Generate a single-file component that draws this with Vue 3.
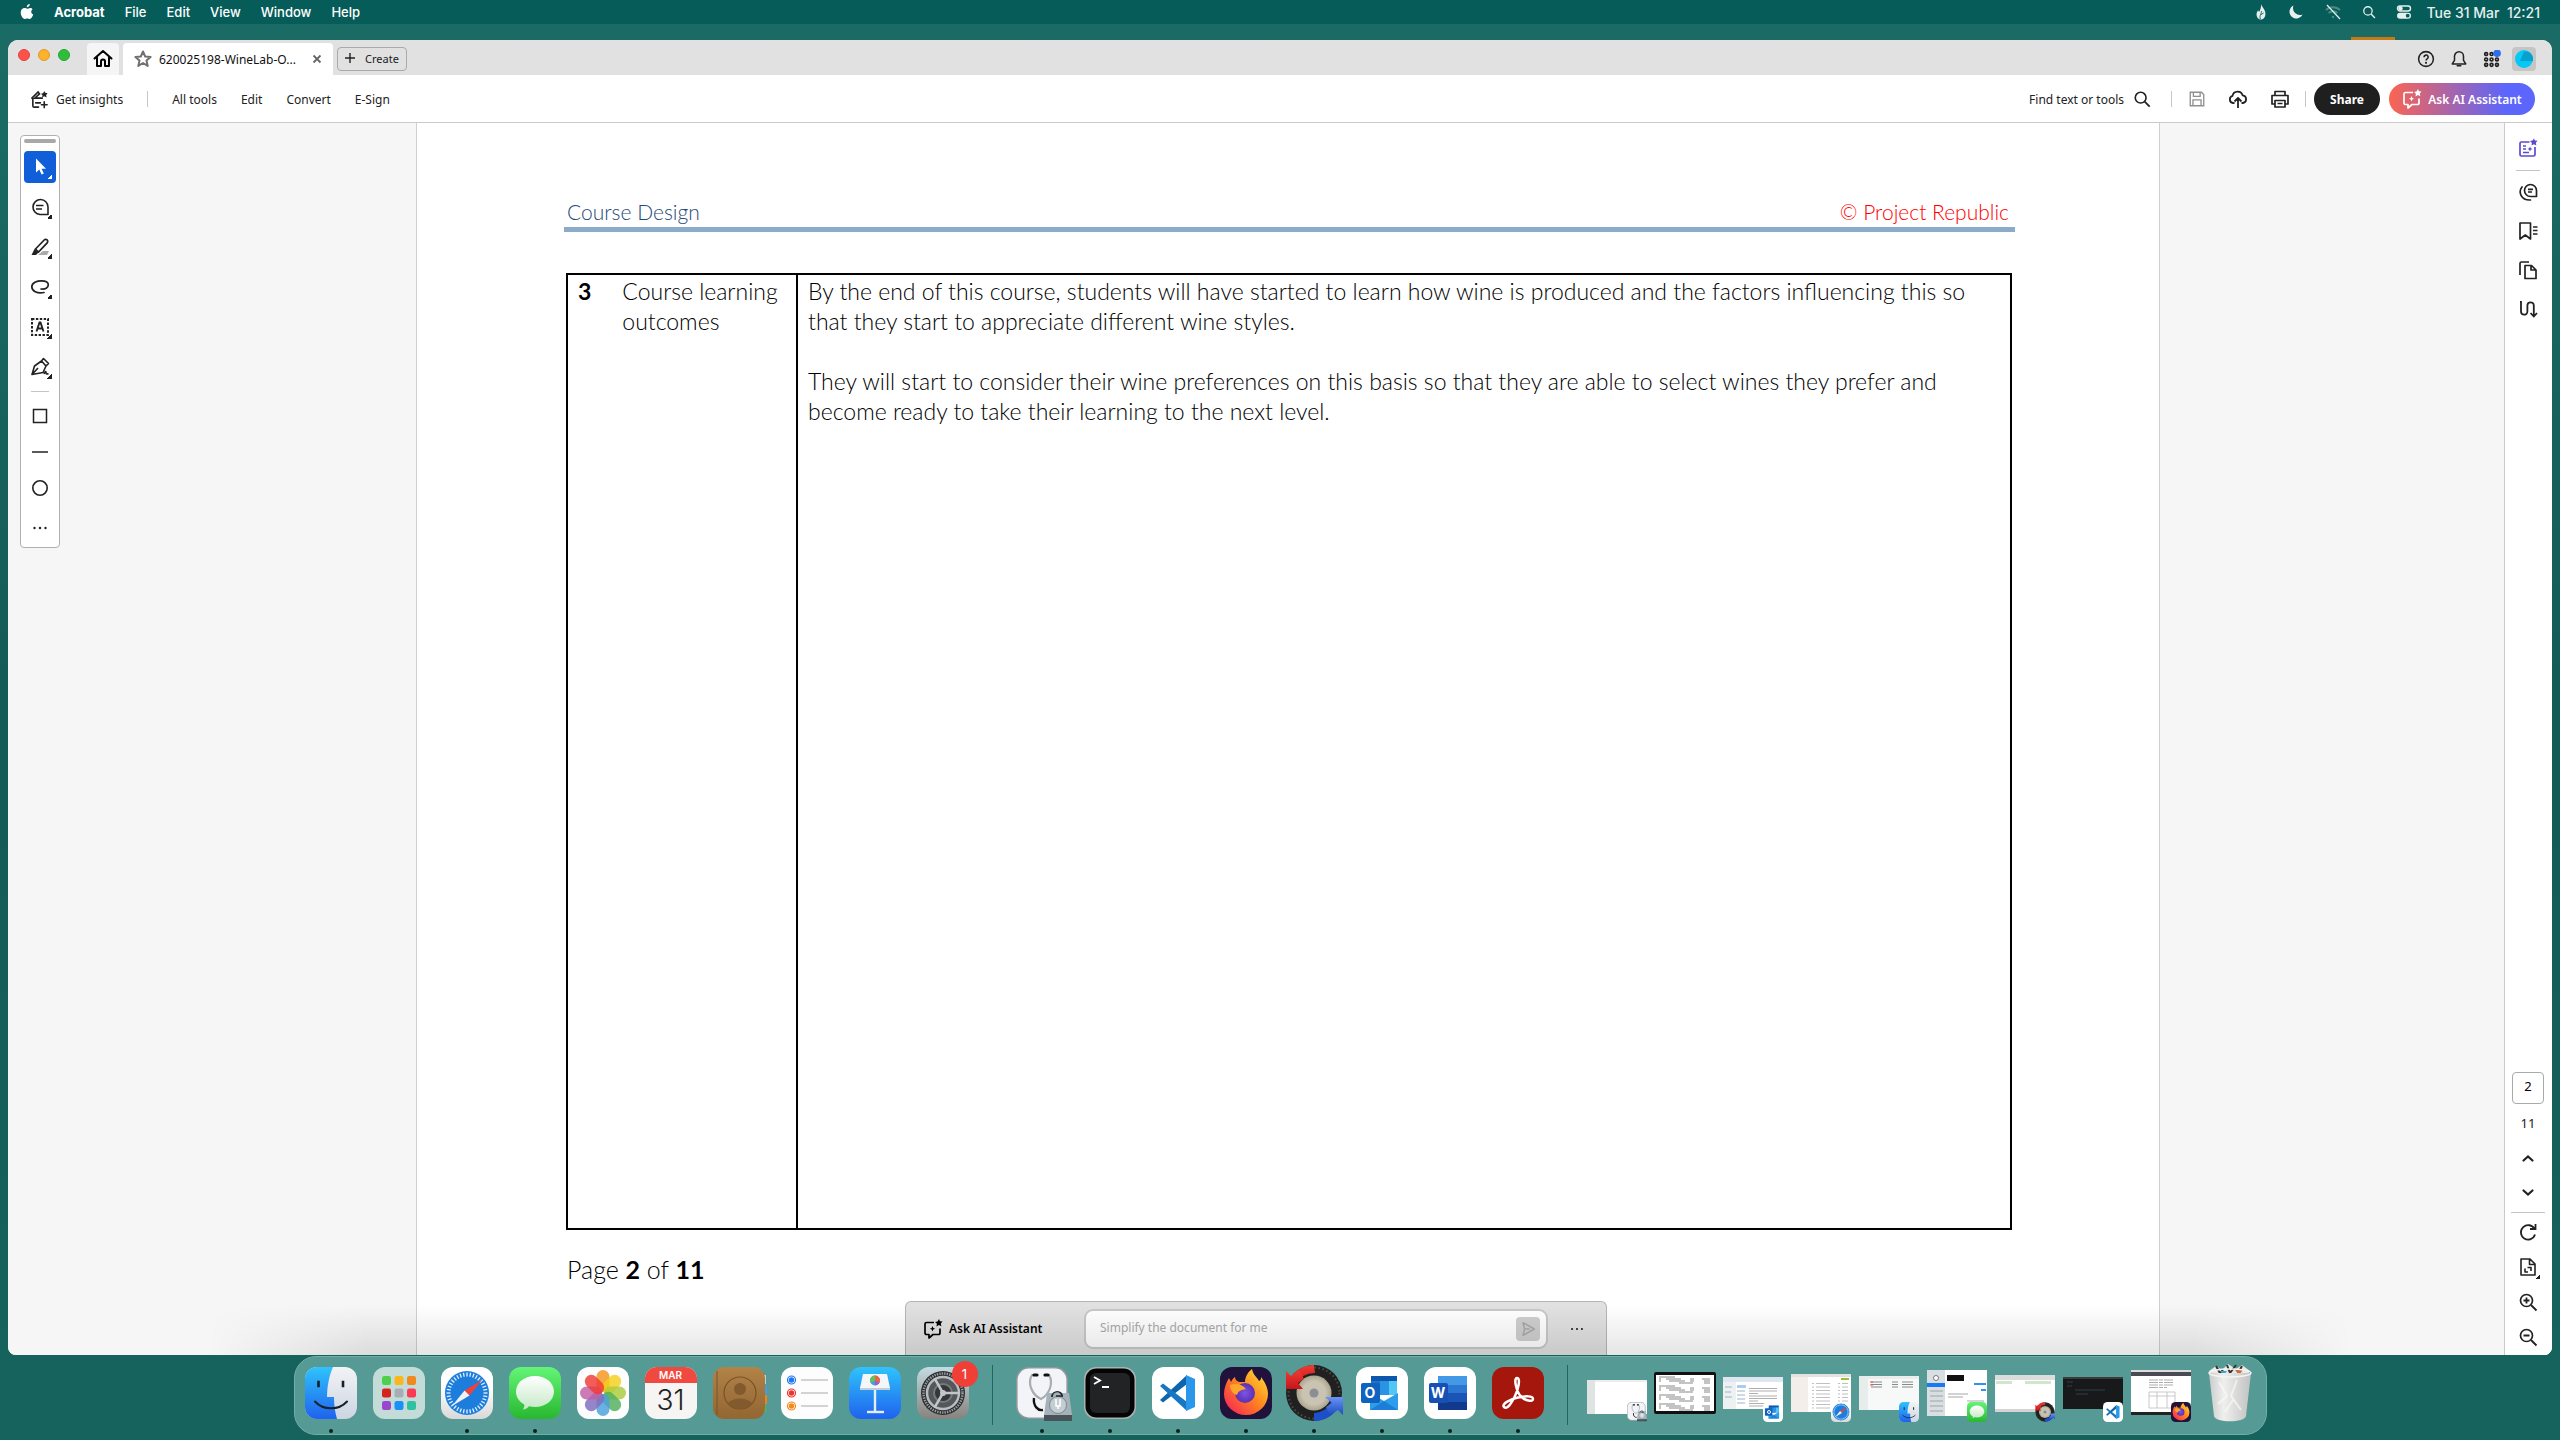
<script setup>
const menus = ['File', 'Edit', 'View', 'Window', 'Help']
const toolLinks = ['All tools', 'Edit', 'Convert', 'E-Sign']

const quickTools = [
  { id: 'cursor', label: 'Select', more: true, active: true },
  { id: 'comment', label: 'Add comment', more: true },
  { id: 'highlight', label: 'Highlight', more: true },
  { id: 'draw', label: 'Draw freehand', more: true },
  { id: 'textbox', label: 'Add text', more: true },
  { id: 'sign', label: 'Sign', more: true },
]
const shapeTools = [
  { id: 'square', label: 'Rectangle' },
  { id: 'line', label: 'Line' },
  { id: 'circle', label: 'Oval' },
  { id: 'dots', label: 'More' },
]
const panels = [
  { id: 'comments', label: 'Comments' },
  { id: 'bookmark', label: 'Bookmarks' },
  { id: 'pages', label: 'Pages' },
  { id: 'route', label: 'Reading order' },
]
const viewTools = [
  { id: 'rotate', label: 'Rotate' },
  { id: 'fit', label: 'Fit page', more: true },
  { id: 'zoomin', label: 'Zoom in' },
  { id: 'zoomout', label: 'Zoom out' },
]

const pinned = [
  { id: 'finder', label: 'Finder', open: true },
  { id: 'launchpad', label: 'Launchpad' },
  { id: 'safari', label: 'Safari', open: true },
  { id: 'messages', label: 'Messages', open: true },
  { id: 'photos', label: 'Photos' },
  { id: 'calendar', label: 'Calendar', month: 'MAR', day: '31' },
  { id: 'contacts', label: 'Contacts' },
  { id: 'reminders', label: 'Reminders' },
  { id: 'keynote', label: 'Keynote' },
  { id: 'settings', label: 'System Settings', badge: '1' },
]
const running = [
  { id: 'disk', label: 'Disk Utility' },
  { id: 'terminal', label: 'Terminal' },
  { id: 'vscode', label: 'Code' },
  { id: 'firefox', label: 'Firefox' },
  { id: 'beyond', label: 'Sync' },
  { id: 'outlook', label: 'Outlook', mark: 'O' },
  { id: 'word', label: 'Word', mark: 'W' },
  { id: 'acrobat', label: 'Acrobat' },
]
const minimized = [
  { id: 'disk', thumb: 'blank' },
  { id: '', thumb: 'term' },
  { id: 'outlook', thumb: 'mail', ring: true },
  { id: 'safari', thumb: 'web' },
  { id: 'finder', thumb: 'files' },
  { id: 'messages', thumb: 'chat' },
  { id: 'beyond', thumb: 'compare' },
  { id: 'vscode', thumb: 'code' },
  { id: 'firefox', thumb: 'page' },
]
const petals = ['#f7941d', '#f4cf1a', '#a9cc3c', '#4fae5b', '#4a9fdc', '#7f6bbd', '#c05fa6', '#ee3b35']
const ticks = Array.from({ length: 36 }, (_, i) => i * 10)
</script>

<template>
  <svg class="defs" aria-hidden="true">
    <defs>
      <linearGradient id="gBlue" x2="0" y2="1"><stop stop-color="#2fc3fb" /><stop offset="1" stop-color="#1f62ee" /></linearGradient>
      <linearGradient id="gPale" x2="0" y2="1"><stop stop-color="#f3f3f5" /><stop offset="1" stop-color="#ccd5e2" /></linearGradient>
      <linearGradient id="gWhite" x2="0" y2="1"><stop offset=".4" stop-color="#fff" /><stop offset="1" stop-color="#d8d8d8" /></linearGradient>
      <linearGradient id="gGreen" x2="0" y2="1"><stop stop-color="#64f578" /><stop offset="1" stop-color="#28b72f" /></linearGradient>
      <linearGradient id="gBubble" x2="0" y2="1"><stop stop-color="#fff" /><stop offset="1" stop-color="#c5e9c6" /></linearGradient>
      <linearGradient id="gBrown" x2="0" y2="1"><stop stop-color="#b18348" /><stop offset="1" stop-color="#936632" /></linearGradient>
      <linearGradient id="gSteel" x2="0" y2="1"><stop stop-color="#c4dbe2" /><stop offset="1" stop-color="#87827e" /></linearGradient>
      <linearGradient id="gFox" x1="1" x2="0" y2="1"><stop stop-color="#ffe83d" /><stop offset=".45" stop-color="#ff8a1e" /><stop offset="1" stop-color="#f5175d" /></linearGradient>
      <radialGradient id="gOrb"><stop stop-color="#7d54e8" /><stop offset="1" stop-color="#5b2fae" /></radialGradient>
      <radialGradient id="gHub"><stop stop-color="#fff" /><stop offset="1" stop-color="#aba38c" /></radialGradient>
      <linearGradient id="gRed" x2="0" y2="1"><stop stop-color="#ef3d35" /><stop offset="1" stop-color="#c4151a" /></linearGradient>
      <linearGradient id="gArrow" x2="0" y2="1"><stop stop-color="#6b93f4" /><stop offset="1" stop-color="#1c4cc4" /></linearGradient>
      <linearGradient id="gTrash" x2="1"><stop stop-color="#c9cccb" /><stop offset=".35" stop-color="#efefee" /><stop offset="1" stop-color="#bfc2c1" /></linearGradient>
    </defs>

    <!-- toolbar glyphs -->
    <symbol id="i-home" viewBox="0 0 20 20"><path d="M1.5 9.5 10 2l8.500 7.500M4 8v9h4v-4.500a2 2 0 0 1 4 0V17h4V8" fill="none" stroke="currentColor" stroke-width="2" stroke-linecap="round" stroke-linejoin="round" /></symbol>
    <symbol id="i-star" viewBox="0 0 20 20"><path d="m10 2.500 2.200 5 5.400.5-4.100 3.600 1.200 5.300L10 14l-4.700 2.900 1.200-5.300L2.400 8l5.400-.5z" fill="none" stroke="currentColor" stroke-width="2" stroke-linejoin="round" /></symbol>
    <symbol id="i-close" viewBox="0 0 10 10"><path d="m1.500 1.500 7 7m0-7-7 7" stroke="currentColor" stroke-width="1.800" /></symbol>
    <symbol id="i-plus" viewBox="0 0 10 10"><path d="M5 0v10M0 5h10" stroke="currentColor" stroke-width="1.400" /></symbol>
    <symbol id="i-insights" viewBox="0 0 20 20"><g fill="none" stroke="currentColor" stroke-width="1.700" stroke-linecap="round"><path d="M2 8.500 8.500 2l1.500 2-5 4.500H13M3 9v7.500a1.500 1.500 0 0 0 1.500 1.500H9M6 13.500h5M15 12.500v6M12 15.500h6" /></g><path d="m15 1 1 2 2.500.3-1.500 2 .5 2.700-2.500-1.300L12.700 8l.5-2.500L11.500 4l2.300-.6z" fill="currentColor" /></symbol>
    <symbol id="i-search" viewBox="0 0 20 20"><circle cx="8.500" cy="8.500" r="6" fill="none" stroke="currentColor" stroke-width="1.800" /><path d="m13 13 5.500 5.500" stroke="currentColor" stroke-width="2" /></symbol>
    <symbol id="i-save" viewBox="0 0 20 20"><path d="M2.500 2.500h12.500l2.500 2.500v12.500h-15zM6 2.500v4.500h7.500V2.500M5.500 17v-6h9v6" fill="none" stroke="currentColor" stroke-width="1.500" /></symbol>
    <symbol id="i-cloud" viewBox="0 0 20 20"><path d="M6.500 14H5a3.700 3.700 0 0 1-.5-7.200A5.200 5.200 0 0 1 14.600 6.300 3.900 3.900 0 0 1 15 14h-1.500M10 19V9.500M6.500 12.500 10 9l3.500 3.500" fill="none" stroke="currentColor" stroke-width="1.800" stroke-linejoin="round" /></symbol>
    <symbol id="i-print" viewBox="0 0 20 20"><path d="M5 6.500V2.500h10v4M5 15H2V6.500h16V15h-3M5 11.500h10v6.500H5zM7.500 14.500h5" fill="none" stroke="currentColor" stroke-width="1.700" stroke-linejoin="round" /></symbol>
    <symbol id="i-assist" viewBox="0 0 20 20"><path d="M11 3.500H3.500A1.500 1.500 0 0 0 2 5v9a1.500 1.500 0 0 0 1.500 1.500H6V19l4-3.500h5.500A1.500 1.500 0 0 0 17 14V9.500" fill="none" stroke="currentColor" stroke-width="1.700" stroke-linejoin="round" /><path d="m16 0 .9 2.300 2.600.2-1.700 2 .6 2.800-2.500-1.300L13.500 7.500l.4-2.700L12 3l2.500-.5zM9.500 7l.8 1.900 1.900.8-1.900.8-.8 1.900-.8-1.900-1.900-.8 1.900-.8z" fill="currentColor" /></symbol>
    <symbol id="i-help" viewBox="0 0 20 20"><circle cx="10" cy="10" r="8.200" fill="none" stroke="currentColor" stroke-width="1.700" /><path d="M7.800 8a2.300 2.300 0 1 1 3.300 2q-1 .5-1 1.700" fill="none" stroke="currentColor" stroke-width="1.800" /><circle cx="10" cy="14.300" r="1.200" fill="currentColor" /></symbol>
    <symbol id="i-bell" viewBox="0 0 20 20"><path d="M10 2a5 5 0 0 1 5 5v4.500l2.500 4h-15l2.500-4V7a5 5 0 0 1 5-5zM8 17.500h4" fill="none" stroke="currentColor" stroke-width="1.700" stroke-linejoin="round" stroke-linecap="round" /></symbol>
    <symbol id="i-grid" viewBox="0 0 20 20"><g fill="none" stroke="currentColor" stroke-width="1.900"><circle v-for="n in 9" :key="n" :cx="3.500 + ((n - 1) % 3) * 6" :cy="4.500 + Math.floor((n - 1) / 3) * 6" r="1.600" /></g><circle cx="15.700" cy="3.700" r="4.200" fill="#2c6fea" /></symbol>

    <!-- side tools -->
    <symbol id="i-cursor" viewBox="0 0 20 20"><path d="M6 1.500v14l3.300-3 2.200 5 2.300-1-2.200-4.800h4.400z" fill="currentColor" /></symbol>
    <symbol id="i-comment" viewBox="0 0 20 20"><path d="M18 17.500h-8a7.500 7.500 0 1 1 8-7.500zM6 8.500h7.500M6 12h6" fill="none" stroke="currentColor" stroke-width="1.600" stroke-linejoin="round" /></symbol>
    <symbol id="i-highlight" viewBox="0 0 20 20"><path d="M13 14h6l-2 4H8z" fill="#aaa" /><path d="m5.500 12 8.700-9a2 2 0 0 1 3 2.800L8.500 15z" fill="#fff" stroke="currentColor" stroke-width="1.700" /><path d="m4.500 12 4 3.500-2.500 2.500H1.500z" fill="currentColor" /></symbol>
    <symbol id="i-draw" viewBox="0 0 20 20"><path d="M14 15.500C7 17 1.800 14 1.800 9.800 1.800 5.500 7 3.800 11.500 3.800c4 0 6.800 1.400 6.800 3.900 0 3-3 5-7.300 4.300" fill="none" stroke="currentColor" stroke-width="1.700" stroke-linecap="round" /></symbol>
    <symbol id="i-textbox" viewBox="0 0 20 20"><rect x="2" y="2" width="16" height="16" fill="none" stroke="currentColor" stroke-width="2" stroke-dasharray="2.400 1.500" /><path d="m6.500 14.500 3-9h1l3 9M7.800 11.500h4.400" fill="none" stroke="currentColor" stroke-width="1.900" /></symbol>
    <symbol id="i-sign" viewBox="0 0 20 20"><path d="M2 17.500 4.500 9l7-5L16 9l-3 6.500zM11.500 4l2-2.500 5 5L16 9M2.500 17l5.500-6M14 17q2-4 2-1.500t2.500 1" fill="none" stroke="currentColor" stroke-width="1.600" stroke-linejoin="round" /></symbol>
    <symbol id="i-square" viewBox="0 0 20 20"><rect x="3.500" y="3.500" width="13" height="13" fill="none" stroke="currentColor" stroke-width="1.500" /></symbol>
    <symbol id="i-line" viewBox="0 0 20 20"><path d="M2 10h16" stroke="currentColor" stroke-width="1.500" /></symbol>
    <symbol id="i-circle" viewBox="0 0 20 20"><circle cx="10" cy="10" r="7.200" fill="none" stroke="currentColor" stroke-width="1.600" /></symbol>
    <symbol id="i-dots" viewBox="0 0 20 20"><g fill="currentColor"><circle cx="4.500" cy="10" r="1.200" /><circle cx="10" cy="10" r="1.200" /><circle cx="15.500" cy="10" r="1.200" /></g></symbol>
    <symbol id="i-summary" viewBox="0 0 20 20"><path d="M11.500 4H3.500A1.500 1.500 0 0 0 2 5.500v11A1.500 1.500 0 0 0 3.500 18h12a1.500 1.500 0 0 0 1.500-1.500V9M5 8h3M5 11h3M5 14.500h6" fill="none" stroke="currentColor" stroke-width="1.700" /><path d="m16 .5.900 2.100 2.600.2-1.700 2 .6 2.700-2.500-1.200L13.500 7.500l.4-2.500L12 3l2.500-.4zM12 8.500l.8 1.700 1.700.8-1.700.8-.8 1.700-.8-1.700-1.700-.8 1.700-.8z" fill="currentColor" /></symbol>
    <symbol id="i-comments" viewBox="0 0 20 20"><path d="M18.500 14.500h-6a6 6 0 1 1 6-6zM10 7.300h5M10 10h4" fill="none" stroke="currentColor" stroke-width="1.700" stroke-linejoin="round" /><path d="M4 5C0 10 3 18.500 12.500 18" fill="none" stroke="currentColor" stroke-width="1.700" stroke-linecap="round" /></symbol>
    <symbol id="i-bookmark" viewBox="0 0 20 20"><path d="M2 2h10.500v16l-5.200-4L2 18zM15 6h4.500M15 9.500h4.500M15 13h4.500" fill="none" stroke="currentColor" stroke-width="1.700" stroke-linejoin="round" /></symbol>
    <symbol id="i-pages" viewBox="0 0 20 20"><path d="M7 5.500h6.500L18 10v8.500H7zM13 5.500V10h5M2 15V3.500A1.500 1.500 0 0 1 3.500 2H11" fill="none" stroke="currentColor" stroke-width="1.700" stroke-linejoin="round" /></symbol>
    <symbol id="i-route" viewBox="0 0 20 20"><path d="M2 3h1v9.500a3.200 3.200 0 0 0 6.400 0V6.500a3.200 3.200 0 0 1 6.400 0V17M12.500 14l3.300 3.500L19 14" fill="none" stroke="currentColor" stroke-width="1.800" /></symbol>
    <symbol id="i-up" viewBox="0 0 20 20"><path d="m5.500 12.500 4.500-4 4.500 4" fill="none" stroke="currentColor" stroke-width="2.200" stroke-linecap="round" /></symbol>
    <symbol id="i-down" viewBox="0 0 20 20"><path d="m5.500 7.500 4.500 4 4.500-4" fill="none" stroke="currentColor" stroke-width="2.200" stroke-linecap="round" /></symbol>
    <symbol id="i-rotate" viewBox="0 0 20 20"><path d="M16.500 7A7.200 7.200 0 1 0 17 12.500M12 7h5.500V2" fill="none" stroke="currentColor" stroke-width="1.800" /></symbol>
    <symbol id="i-fit" viewBox="0 0 20 20"><path d="M3 2h9l5 5v11H3zM11.500 2v5.500H17M7 11.500V15h3M9.500 10.500H13V14" fill="none" stroke="currentColor" stroke-width="1.600" stroke-linejoin="round" /></symbol>
    <symbol id="i-zoomin" viewBox="0 0 20 20"><circle cx="8.500" cy="8.500" r="6" fill="none" stroke="currentColor" stroke-width="1.700" /><path d="m13 13 5.500 5.500M8.500 5.500v6M5.500 8.500h6" stroke="currentColor" stroke-width="1.800" /></symbol>
    <symbol id="i-zoomout" viewBox="0 0 20 20"><circle cx="8.500" cy="8.500" r="6" fill="none" stroke="currentColor" stroke-width="1.700" /><path d="m13 13 5.500 5.500M5.500 8.500h6" stroke="currentColor" stroke-width="1.800" /></symbol>
    <symbol id="i-send" viewBox="0 0 20 20"><path d="M4.500 3 17 10 4.500 17l1.700-7zM6 10h6" fill="none" stroke="currentColor" stroke-width="1.700" stroke-linejoin="round" /></symbol>

    <!-- menu bar -->
    <symbol id="i-apple" viewBox="0 0 14 16"><path fill="currentColor" d="M9.800 0c.1 1.600-1.300 3.200-3 3.200C6.600 1.700 8.100.2 9.800 0zM12.600 5.300c-2 1.300-1.700 4.200.6 5.200-.6 1.900-2 4.500-3.500 4.500-1 0-1.300-.6-2.500-.6s-1.600.6-2.500.6C2.700 15 .7 11.500.7 8.600c0-3 1.900-4.600 3.800-4.600 1.100 0 2 .7 2.700.7s1.700-.8 3-.8c.9 0 1.900.5 2.400 1.400z" /></symbol>
    <symbol id="i-drop" viewBox="0 0 14 18"><path d="M7.500 0c.5 4 4.500 6 4.500 11 0 4-2.500 6.500-5 6.500S2 15.500 2 11.500c0-2 1-3.500 2-4.500l.7 2C6.500 7 7 3.500 7.500 0z" fill="currentColor" /><path d="M6.500 17c-2-4 1-5 1-9M7 12l3-2" fill="none" stroke="#055c58" /></symbol>
    <symbol id="i-moon" viewBox="0 0 16 16"><path d="M5.500 1.500a6.800 6.800 0 1 0 9 9A7 7 0 0 1 5.500 1.500z" fill="currentColor" /></symbol>
    <symbol id="i-wifi" viewBox="0 0 18 16"><g fill="none" stroke="#6d9e99" stroke-width="2" opacity=".7"><path d="M2 6a10 10 0 0 1 14 0M4.700 9a6 6 0 0 1 8.600 0" /><path d="M8 13h2" /></g><path d="m3 1 13 14" stroke="currentColor" stroke-width="1.200" /></symbol>
    <symbol id="i-control" viewBox="0 0 16 16"><rect x="1.500" y="2" width="13" height="5" rx="2.500" fill="none" stroke="currentColor" stroke-width="1.400" /><circle cx="4.500" cy="4.500" r="2.200" fill="currentColor" /><rect x="1" y="8.700" width="14" height="6" rx="3" fill="currentColor" /><circle cx="11.700" cy="11.700" r="1.900" fill="#055c58" /></symbol>

    <!-- dock apps -->
    <symbol id="a-finder" viewBox="0 0 52 52"><rect width="52" height="52" rx="12" fill="url(#gPale)" /><path d="M12 0h16c-4 9-6 20-6 30h7c0 8 1 15 3 22H12A12 12 0 0 1 0 40V12A12 12 0 0 1 12 0z" fill="url(#gBlue)" /><path d="M13.500 15v4M38 15v4" stroke="#15202b" stroke-width="2.600" stroke-linecap="square" /><path d="M10 34.500c8 9 24 9 32 0" fill="none" stroke="#15202b" stroke-width="2" stroke-linecap="round" /></symbol>
    <symbol id="a-launchpad" viewBox="0 0 52 52"><rect width="52" height="52" rx="12" fill="#c3dcd8" /><rect v-for="(c, n) in ['#4fd04d', '#fbb51d', '#f08a1c', '#d8221d', '#a9adb3', '#fb3b54', '#9a47d0', '#1a91f8', '#31c1a0']" :key="c" :x="9 + (n % 3) * 12.500" :y="9 + Math.floor(n / 3) * 12.500" width="9" height="9" rx="2.200" :fill="c" /></symbol>
    <symbol id="a-safari" viewBox="0 0 52 52"><rect width="52" height="52" rx="12" fill="url(#gWhite)" /><circle cx="26" cy="26" r="22" fill="#1c7ddd" /><path v-for="t in ticks" :key="t" d="M26 5.500v4" stroke="#e8f3fd" stroke-width="1.300" :transform="`rotate(${t} 26 26)`" /><path d="M41 13 28.500 28.500l-5-5z" fill="#f1403a" /><path d="m11 39 12.500-15.500 5 5z" fill="#f1f1f1" /></symbol>
    <symbol id="a-messages" viewBox="0 0 52 52"><rect width="52" height="52" rx="12" fill="url(#gGreen)" /><path d="M26 9c11 0 19 7 19 15.500S37 40 26 40c-2 0-4-.3-6-.8-1.500 1.800-3.500 3-6 3.300 1-1.500 1.500-3 1.300-5C10 34.500 7 30 7 24.500 7 16 15 9 26 9z" fill="url(#gBubble)" /></symbol>
    <symbol id="a-photos" viewBox="0 0 52 52"><rect width="52" height="52" rx="12" fill="#fdfdfd" /><rect v-for="(c, n) in petals" :key="c" x="19.500" y="3" width="13" height="22" rx="6.500" :fill="c" opacity=".82" :transform="`rotate(${n * 45} 26 26)`" /></symbol>
    <symbol id="a-calendar" viewBox="0 0 52 52"><rect width="52" height="52" rx="12" fill="#f6f5f3" /><path d="M0 16v-4A12 12 0 0 1 12 0h28a12 12 0 0 1 12 12v4z" fill="#f0493f" /></symbol>
    <symbol id="a-contacts" viewBox="0 0 54 52"><path d="M46 8h7v9h-7z" fill="#c9ccce" /><path d="M46 18h8v9h-8z" fill="#3f9fe0" /><path d="M46 28h8v9h-8z" fill="#f1801f" /><path d="M46 38h7v7h-7z" fill="#52b84f" /><rect width="52" height="52" rx="11" fill="url(#gBrown)" /><path d="M4 4v44" stroke="#7b5328" /><circle cx="27" cy="26" r="16" fill="none" stroke="#7a5227" stroke-width="1.200" /><circle cx="27" cy="22" r="6" fill="#825a2d" /><path d="M15 36c5-6 19-6 24 0-6 8-18 8-24 0z" fill="#825a2d" /></symbol>
    <symbol id="a-reminders" viewBox="0 0 52 52"><rect width="52" height="52" rx="12" fill="#fdfdfd" /><g v-for="(c, n) in ['#1d76f2', '#ec342f', '#f28a1c']" :key="c"><circle cx="10.500" :cy="13 + n * 13" r="4" fill="none" :stroke="c" stroke-width="1.200" /><circle cx="10.500" :cy="13 + n * 13" r="2.700" :fill="c" /><path :d="`M20 ${13 + n * 13}h27`" stroke="#c9c9c9" stroke-width="1.600" /></g></symbol>
    <symbol id="a-keynote" viewBox="0 0 52 52"><rect width="52" height="52" rx="12" fill="url(#gBlue)" /><path d="M14 7h24l3 14H11z" fill="#f5f6f8" /><path d="M11 21h30v2H11z" fill="#c3cdd8" /><path d="M26 23v21" stroke="#e6edf7" stroke-width="2.400" /><path d="M18 45h17" stroke="#e6edf7" stroke-width="2.400" /><circle cx="26" cy="13.500" r="5" fill="#38a5e8" /><path d="M26 13.500v-5a5 5 0 0 1 4.300 7.500z" fill="#f1623c" /><path d="M26 13.500 21.700 16A5 5 0 0 1 26 8.500z" fill="#61c354" /><path d="m26 13.500 4.300 2.500a5 5 0 0 1-4.300 2.500z" fill="#a259c9" /></symbol>
    <symbol id="a-settings" viewBox="0 0 52 52"><rect width="52" height="52" rx="12" fill="url(#gSteel)" /><circle cx="26" cy="26" r="22" fill="#2c2e30" /><circle cx="26" cy="26" r="19.500" fill="none" stroke="#9a9ea0" stroke-width="2.500" stroke-dasharray="1.400 1.100" /><circle cx="26" cy="26" r="16" fill="#55585a" stroke="#b9bdbf" stroke-width="2.500" /><circle cx="26" cy="26" r="9" fill="#353739" stroke="#77797b" stroke-width="2" /><g stroke="#c3c6c8" stroke-width="2.500"><path d="M26 26h17M26 26 17.500 11.300M26 26l-8.500 14.700" /></g><circle cx="26" cy="26" r="3" fill="#c3c6c8" /></symbol>
    <symbol id="a-disk" viewBox="0 0 56 56"><rect x=".8" y=".8" width="50.400" height="50.400" rx="12" fill="#f2f4f7" stroke="#8e979c" stroke-width="1.600" /><path d="M20 8h-4c-5 8 0 20 9 24 8-4 13-16 8-24h-3" fill="none" stroke="#a7adb0" stroke-width="2.200" /><path d="M18 8h3M29 8h3" stroke="#111" stroke-width="3.200" stroke-linecap="round" /><path d="M18 31c-1 8 4 13 9 12" fill="none" stroke="#111" stroke-width="2.400" /><path d="M31 26h22l3 22H28z" fill="#a6b2ba" /><path d="M28 48h28v6H28z" fill="#49535a" /><circle cx="42" cy="38" r="8.500" fill="#c4cdd2" stroke="#7c878e" /><path d="M36 30c0-7 11-7 10 0M40 29h5" fill="none" stroke="#22282c" stroke-width="1.700" /><path d="M40 32v7h4v-7M42 39v3" fill="none" stroke="#fff" stroke-width="1.500" /></symbol>
    <symbol id="a-terminal" viewBox="0 0 52 52"><rect width="52" height="52" rx="12" fill="#aab3b4" /><rect x="1.500" y="1.500" width="49" height="49" rx="11" fill="#050505" /><rect x="6" y="6" width="40" height="40" rx="6" fill="#222324" /><path d="m10 10 6 3.500-6 3.500M18 20h7" fill="none" stroke="#fff" stroke-width="1.900" /></symbol>
    <symbol id="a-vscode" viewBox="0 0 52 52"><rect width="52" height="52" rx="12" fill="#fff" /><path d="m35 8-27 25 3 2.500L35 17z" fill="#0d66ad" /><path d="M35 44 8 19l3-2.500L35 35z" fill="#1877c4" /><path d="M34 8 43 12v28l-9 4z" fill="#2a98ea" /></symbol>
    <symbol id="a-firefox" viewBox="0 0 52 52"><rect width="52" height="52" rx="12" fill="#20123a" /><path d="M32 2c1 6 5 8 7 12 2-1 2-2 2-4 4 5 7 11 7 17a22 21 0 1 1-44 0c0-6 2-11 5-16l2 4c1-2 2-4 4-5 0 3 2 4 4 5h6c0-5 3-10 7-13z" fill="url(#gFox)" /><circle cx="25" cy="26" r="10" fill="url(#gOrb)" /><path d="M10 18c6-2 12-1 16 4-5 1-8 2-9 6-4-1-7-5-7-10z" fill="#ffa529" /></symbol>
    <symbol id="a-beyond" viewBox="0 0 58 58"><circle cx="29" cy="29" r="28" fill="#202020" /><circle cx="29" cy="29" r="25.500" fill="none" stroke="#4c4c4c" stroke-width="2" stroke-dasharray="1.500 2.500" /><path d="M29 1A28 28 0 0 0 4 16l7 4a20 20 0 0 1 19-11z" fill="url(#gRed)" /><path d="M29 57a28 28 0 0 0 25-15l-8-4a20 20 0 0 1-17 11z" fill="#1d4fca" /><circle cx="29" cy="29" r="17.500" fill="url(#gHub)" /><circle cx="29" cy="29" r="12" fill="#c9c3b1" /><circle cx="29" cy="29" r="4.500" fill="#8b8e92" /><path d="M40 33h18v18l-5-5-8 5-4-8 6-4z" fill="url(#gArrow)" /><path d="M1 7l5 5 8-6 5 9-6 4 5 6H1z" fill="url(#gRed)" /></symbol>
    <symbol id="a-outlook" viewBox="0 0 52 52"><rect width="52" height="52" rx="12" fill="#fff" /><path d="M15 9h26v18H15z" fill="#0f57ab" /><path d="M15 14h9v14h-9z" fill="#1a74d0" /><path d="M24 14h9v14h-9z" fill="#2a93e4" /><path d="M33 14h8v14h-8z" fill="#52c6f5" /><path d="M14 26 28 34l14-8v17H14z" fill="#2c9ceb" /><path d="m28 34 14 9H14z" fill="#1b7fd8" /><rect x="5" y="16" width="19" height="20" rx="2" fill="#1062c0" /></symbol>
    <symbol id="a-word" viewBox="0 0 52 52"><rect width="52" height="52" rx="12" fill="#fff" /><path d="M14 9h29v9H14z" fill="#4399e6" /><path d="M14 18h29v9H14z" fill="#2a76d0" /><path d="M14 26h29v9H14z" fill="#1a55b5" /><path d="M14 35h29v8H14z" fill="#123a8c" /><rect x="5" y="16" width="19" height="20" rx="2" fill="#1650b5" /></symbol>
    <symbol id="a-acrobat" viewBox="0 0 52 52"><rect width="52" height="52" rx="12" fill="#a5170c" /><path d="M25 11c4 0 1 12-2 18-4 8-8 14-11 11s7-8 14-9.500 15-2 15 1.500-8 1.500-12-2.500-8-18-4-18.500z" fill="none" stroke="#fff" stroke-width="2.500" stroke-linejoin="round" /></symbol>
    <symbol id="a-trash" viewBox="0 0 46 60"><path d="m2 9 7-5 6 4 6-6 8 5 6-4 8 6-4 6H6z" fill="#e8e8e6" /><path d="m9 4 4 7 3-3M20 3l3 8 6-8M35 4l-4 7" fill="none" stroke="#39332f" stroke-width="2" /><path d="M13 9h7l-3 4z" fill="#2fb0cf" /><path d="m28 8 4 5 4-5z" fill="#cf6b3a" /><path d="M2 11h42l-5 43c-1 7-31 7-32 0z" fill="url(#gTrash)" /><ellipse cx="23" cy="11" rx="21" ry="4" fill="none" stroke="#f4f4f3" stroke-width="1.500" /><path d="m12 20 8 14-9 8M30 18l-6 16 10 14M18 50l8-12" fill="none" stroke="#f9f9f8" stroke-width="2" opacity=".7" /></symbol>

    <!-- minimised windows -->
    <symbol id="t-blank" viewBox="0 0 60 52"><path d="M0 13h60v34H0z" fill="#fff" /><path d="M0 13h60v2H0z" fill="#ededed" /><path d="M0 13h8v34H0z" fill="#dfe4e2" /></symbol>
    <symbol id="t-term" viewBox="0 0 62 42"><rect width="62" height="42" rx="2" fill="#111" /><path d="M2 3h58v36H2z" fill="#fff" /><path v-for="n in 4" :key="n" :d="`M5 ${n * 9 - 4}h16M5 ${n * 9 - 2}h2M12 ${n * 9 - 2}h15M36 ${n * 9 - 2}h4M48 ${n * 9 - 2}h8M5 ${n * 9}h2M15 ${n * 9}h16M36 ${n * 9}h4M50 ${n * 9}h6M25 ${n * 9 + 2}h14M50 ${n * 9 + 2}h6`" stroke="#888" /></symbol>
    <symbol id="t-mail" viewBox="0 0 60 52"><path d="M0 10h60v32H0z" fill="#fff" /><path d="M0 10h60v5H0z" fill="#dfe6f0" /><path d="M0 15h13v27H0z" fill="#eef1f2" /><path d="M14 18h9v3h-9z" fill="#a9cdf0" /><g stroke="#999" stroke-width=".8"><path v-for="n in 8" :key="n" :d="`M26 ${19 + n * 2.500}h${n % 3 ? 28 : 9}`" /></g><path d="M14 24h8M14 28h8M14 32h8M14 36h8M2 20h7M2 25h6M2 30h7" stroke="#9ab4cc" /></symbol>
    <symbol id="t-web" viewBox="0 0 60 52"><path d="M0 7h60v38H0z" fill="#fff" /><path d="M0 7h60v3H0z" fill="#e2e2e0" /><path d="M0 10h17v35H0z" fill="#f4eeea" /><path d="M50 11h8v2h-8z" fill="#9bbf3b" /><g stroke="#b9b9b9" stroke-dasharray="2 2 14 8"><path v-for="n in 8" :key="n" :d="`M21 ${13 + n * 3.500}h36`" stroke-width=".9" /></g></symbol>
    <symbol id="t-files" viewBox="0 0 60 52"><path d="M0 9h60v34H0z" fill="#f7f9f9" /><path d="M0 9h9v34H0z" fill="#e6edeb" /><path d="M9 9h51v3H9z" fill="#ececec" /><g stroke="#7c7c7c" stroke-width=".9" stroke-dasharray="11 10 6 4"><path d="M12 15h45M12 17.500h45M12 20h45" /></g><path d="M11 15h3M11 18h3" stroke="#e35b4b" /></symbol>
    <symbol id="t-chat" viewBox="0 0 60 52"><path d="M0 3h60v46H0z" fill="#fff" /><path d="M0 3h18v46H0z" fill="#d9dee2" /><path d="M0 16h18v4H0z" fill="#1978f3" /><path d="M20 8h17v6H20z" fill="#111" /><path d="M47 16h12v2H47zM54 22h5v2h-5z" fill="#2e92f4" /><circle cx="9" cy="11" r="2.500" fill="#fff" stroke="#777" /><g stroke="#9c9c9c" stroke-width=".9"><path d="M3 24h13M3 29h13M3 34h13M3 39h13M3 44h13M21 27h20M21 30h15M40 34h17" /></g></symbol>
    <symbol id="t-compare" viewBox="0 0 60 52"><path d="M0 8h60v37H0z" fill="#fff" /><path d="M0 8h60v5H0z" fill="#dcdcdc" /><path d="M1 14h16v3H1zM30 14h26v3H30z" fill="#cfe8cb" /><path d="M0 42h60v3H0z" fill="#d5d5d5" /></symbol>
    <symbol id="t-code" viewBox="0 0 60 52"><path d="M0 10h60v32H0z" fill="#18191b" /><path d="M0 10h60v2H0z" fill="#3a3b3d" /><path d="M4 15h6M12 23h30M4 19h5M13 27h12" stroke="#345" stroke-width=".9" /></symbol>
    <symbol id="t-page" viewBox="0 0 60 52"><path d="M0 3h60v45H0z" fill="#fff" /><path d="M0 3h60v2H0z" fill="#ddd" /><path d="M0 5h60v4H0z" fill="#4a4a52" /><path d="M0 45h60v3H0z" fill="#222" /><g stroke="#999" stroke-width=".8" stroke-dasharray="9 1 4 1"><path d="M18 13h24M18 15.500h24M18 18h24M18 20.500h18" /></g><path d="M18 25h26v16H18zM26 25v16M36 25v16M18 29h26" fill="none" stroke="#bbb" stroke-width=".8" /></symbol>
  </svg>

  <div class="desktop">
    <header class="menubar">
      <nav class="menus">
        <button class="menu apple" aria-label="Apple"><svg width="14" height="16"><use href="#i-apple" /></svg></button>
        <button class="menu app-name">Acrobat</button>
        <button v-for="m in menus" :key="m" class="menu">{{ m }}</button>
      </nav>
      <div class="status">
        <svg width="14" height="16"><use href="#i-drop" /></svg>
        <svg width="16" height="16"><use href="#i-moon" /></svg>
        <svg width="18" height="16"><use href="#i-wifi" /></svg>
        <svg width="14" height="14"><use href="#i-search" /></svg>
        <svg width="16" height="16"><use href="#i-control" /></svg>
        <time>Tue 31 Mar&nbsp; 12:21</time>
      </div>
    </header>

    <div class="behind"><span class="peek"></span></div>

    <main class="window">
      <div class="tabbar">
        <div class="lights"><i class="red"></i><i class="amber"></i><i class="green"></i></div>
        <button class="home" aria-label="Home"><svg width="20" height="20"><use href="#i-home" /></svg></button>
        <div class="tab">
          <svg class="star" width="20" height="20"><use href="#i-star" /></svg>
          <span class="tab-title">620025198-WineLab-O...</span>
          <button class="close" aria-label="Close tab"><svg width="10" height="10"><use href="#i-close" /></svg></button>
        </div>
        <button class="create"><svg width="10" height="10"><use href="#i-plus" /></svg>Create</button>
        <div class="account">
          <button aria-label="Help"><svg width="18" height="18"><use href="#i-help" /></svg></button>
          <button aria-label="Notifications"><svg width="18" height="18"><use href="#i-bell" /></svg></button>
          <button aria-label="Apps"><svg width="18" height="18"><use href="#i-grid" /></svg></button>
          <button class="avatar" aria-label="Account"><svg width="18" height="18" viewBox="0 0 18 18"><circle cx="9" cy="9" r="9" fill="#06c8f7" /><path d="M9 1.500A8 8 0 0 1 18 11H5z" fill="#0aa0cb" /></svg></button>
        </div>
      </div>

      <div class="toolbar">
        <button class="insights"><svg width="19" height="19"><use href="#i-insights" /></svg>Get insights</button>
        <span class="rule"></span>
        <nav class="links"><a v-for="l in toolLinks" :key="l" href="#">{{ l }}</a></nav>
        <div class="actions">
          <button class="find">Find text or tools <svg width="18" height="18"><use href="#i-search" /></svg></button>
          <span class="rule"></span>
          <button class="muted" aria-label="Save"><svg width="18" height="18"><use href="#i-save" /></svg></button>
          <button aria-label="Upload"><svg width="20" height="20"><use href="#i-cloud" /></svg></button>
          <button aria-label="Print"><svg width="20" height="20"><use href="#i-print" /></svg></button>
          <span class="rule"></span>
          <button class="pill share">Share</button>
          <button class="pill ask"><svg width="20" height="20"><use href="#i-assist" /></svg>Ask AI Assistant</button>
        </div>
      </div>

      <div class="body">
        <aside class="tools">
          <div class="palette">
            <span class="grip"></span>
            <button v-for="t in quickTools" :key="t.id" class="tool" :class="{ active: t.active, more: t.more }" :aria-label="t.label"><svg width="20" height="20"><use :href="'#i-' + t.id" /></svg></button>
            <span class="bar"></span>
            <button v-for="t in shapeTools" :key="t.id" class="tool shape" :aria-label="t.label"><svg width="20" height="20"><use :href="'#i-' + t.id" /></svg></button>
          </div>
        </aside>

        <div class="canvas">
          <article class="sheet">
            <header class="running-head"><span>Course Design</span><span class="credit">© Project Republic</span></header>
            <table class="plan">
              <tbody>
                <tr>
                  <th scope="row"><div class="label"><b>3</b><span>Course learning<br>outcomes</span></div></th>
                  <td>
                    <p>By the end of this course, students will have started to learn how wine is produced and the factors influencing this so<br>that they start to appreciate different wine styles.</p>
                    <p>They will start to consider their wine preferences on this basis so that they are able to select wines they prefer and<br>become ready to take their learning to the next level.</p>
                  </td>
                </tr>
              </tbody>
            </table>
            <footer class="folio">Page <b>2</b> of <b>11</b></footer>
          </article>
        </div>

        <aside class="rail">
          <button class="violet" aria-label="Summary"><svg width="20" height="20"><use href="#i-summary" /></svg></button>
          <span class="bar"></span>
          <button v-for="p in panels" :key="p.id" class="panel" :aria-label="p.label"><svg width="20" height="20"><use :href="'#i-' + p.id" /></svg></button>
          <div class="pager">
            <input aria-label="Page number" value="2">
            <span class="total">11</span>
            <button aria-label="Previous page"><svg width="20" height="20"><use href="#i-up" /></svg></button>
            <button aria-label="Next page"><svg width="20" height="20"><use href="#i-down" /></svg></button>
            <span class="bar wide"></span>
            <button v-for="v in viewTools" :key="v.id" :class="{ more: v.more }" :aria-label="v.label"><svg width="20" height="20"><use :href="'#i-' + v.id" /></svg></button>
          </div>
        </aside>

        <form class="assistant" @submit.prevent>
          <label for="prompt"><svg width="20" height="20"><use href="#i-assist" /></svg>Ask AI Assistant</label>
          <div class="prompt">
            <input id="prompt" placeholder="Simplify the document for me">
            <button class="send" aria-label="Send"><svg width="18" height="18"><use href="#i-send" /></svg></button>
          </div>
          <button type="button" aria-label="More options"><svg width="18" height="18"><use href="#i-dots" /></svg></button>
        </form>
        <div class="shade"></div>
      </div>
    </main>

    <nav class="dock">
      <button v-for="a in pinned" :key="a.id" class="app" :class="[{ open: a.open }, a.id]" :aria-label="a.label">
        <svg class="icon"><use :href="'#a-' + a.id" /></svg>
        <span v-if="a.day" class="date"><span class="month">{{ a.month }}</span><span class="day">{{ a.day }}</span></span>
        <span v-if="a.badge" class="badge">{{ a.badge }}</span>
      </button>
      <span class="divider"></span>
      <button v-for="a in running" :key="a.id" class="app open" :class="a.id" :aria-label="a.label">
        <svg class="icon"><use :href="'#a-' + a.id" /></svg>
        <span v-if="a.mark" class="mark">{{ a.mark }}</span>
      </button>
      <span class="divider"></span>
      <div class="minis">
        <button v-for="m in minimized" :key="m.thumb" class="mini" :aria-label="m.thumb">
          <svg class="thumb" :class="m.thumb"><use :href="'#t-' + m.thumb" /></svg>
          <span v-if="m.id" class="mini-app"><svg width="20" height="20"><use :href="'#a-' + m.id" /></svg><i v-if="m.ring" class="ring"></i></span>
        </button>
      </div>
      <button class="trash" aria-label="Trash"><svg width="46" height="60"><use href="#a-trash" /></svg></button>
    </nav>
  </div>
</template>

<style>
body {
  margin: 0;
  background: #17635f;
}
</style>

<style scoped>
* {
  box-sizing: border-box;
}
.defs {
  position: absolute;
  width: 0;
  height: 0;
}
button {
  display: flex;
  align-items: center;
  justify-content: center;
  padding: 0;
  border: 0;
  background: none;
  color: inherit;
  font: inherit;
  white-space: nowrap;
}
svg {
  display: block;
  flex: none;
}
.desktop {
  display: flex;
  flex-direction: column;
  min-height: 100vh;
  background: linear-gradient(#1b6c66, #145a56 50%, #16635d);
  font-family: "Noto Sans", sans-serif;
  font-size: 12px;
  color: #222;
}

/* menu bar */
.menubar {
  display: flex;
  justify-content: space-between;
  height: 24px;
  padding: 0 20px;
  background: #055c58;
  color: #fff;
  font-family: Inter, sans-serif;
  font-size: 13px;
  font-weight: 500;
}
.menus,
.status {
  display: flex;
  align-items: center;
}
.menus {
  gap: 20px;
}
.app-name {
  font-weight: 700;
}
.status {
  gap: 20px;
  color: #e6efee;
}
time {
  margin-left: -6px;
  font-size: 14px;
}
.behind {
  display: flex;
  justify-content: flex-end;
  align-items: flex-end;
  height: 16px;
  padding-right: 165px;
}
.peek {
  width: 44px;
  height: 3px;
  background: #c47a17;
}

/* window */
.window {
  display: flex;
  flex: 1;
  flex-direction: column;
  margin: 0 8px;
  overflow: hidden;
  border-radius: 10px 10px 8px 8px;
  background: #fff;
}
.tabbar {
  display: flex;
  align-items: flex-end;
  height: 35px;
  padding: 0 16px 0 10px;
  background: #e1e1e1;
}
.lights {
  display: flex;
  gap: 8px;
  align-self: flex-start;
  margin: 9px 17px 0 0;
}
.lights i {
  width: 12px;
  height: 12px;
  border: 1px solid #e0443e;
  border-radius: 50%;
  background: #fe5149;
}
.lights .amber {
  border-color: #de9a23;
  background: #fdb12d;
}
.lights .green {
  border-color: #24a52f;
  background: #2fbd3b;
}
.home {
  width: 32px;
  height: 32px;
  margin-right: 4px;
  border-radius: 4px 4px 0 0;
  background: #f5f5f5;
  color: #000;
}
.tab {
  display: flex;
  align-items: center;
  width: 210px;
  height: 32px;
  padding: 0 11px 0 10px;
  border-radius: 4px 4px 0 0;
  background: #fff;
}
.star {
  margin-right: 6px;
  color: #707070;
}
.tab-title {
  flex: 1;
  color: #111;
  white-space: nowrap;
}
.close {
  color: #666;
}
.create {
  gap: 10px;
  width: 70px;
  height: 24px;
  margin: 0 0 4px 4px;
  padding-bottom: 2px;
  border: 1px solid #a9a9a9;
  border-radius: 4px;
  font-size: 11px;
}
.account {
  display: flex;
  align-items: center;
  gap: 15px;
  margin: 0 0 4px auto;
}
.avatar {
  width: 24px;
  height: 24px;
  margin-left: -4px;
  border-radius: 4px;
  background: #c5c5c5;
}

.toolbar {
  display: flex;
  align-items: center;
  height: 48px;
  padding: 1px 17px 0 22px;
  border-bottom: 1px solid #cacaca;
}
.insights {
  gap: 7px;
}
.rule {
  width: 1px;
  height: 16px;
  background: #c6c6c6;
}
.insights + .rule {
  margin: 0 24px;
}
.links {
  display: flex;
  gap: 24px;
}
a {
  color: inherit;
  text-decoration: none;
}
.actions {
  display: flex;
  align-items: center;
  gap: 22px;
  margin-left: auto;
}
.find {
  gap: 9px;
  margin-right: -2px;
}
.find + .rule {
  margin-right: -6px;
}
.muted {
  color: #909090;
}
.actions .rule:nth-last-child(3) {
  margin: 0 -14px 0 -7px;
}
.pill {
  height: 32px;
  border-radius: 16px;
  color: #fff;
  font-weight: 700;
}
.share {
  width: 66px;
  background: #1f1f1f;
}
.ask {
  gap: 6px;
  width: 146px;
  margin-left: -13px;
  background: linear-gradient(90deg, #fb6450, #5c66fc 80%);
  font-weight: 600;
}

/* document area */
.body {
  position: relative;
  display: flex;
  flex: 1;
  background: #f6f6f6;
}
.tools {
  width: 62px;
  padding: 12px;
}
.palette {
  display: flex;
  flex-direction: column;
  align-items: center;
  width: 40px;
  padding: 3px 0 1px;
  border: 1px solid #b0b0b0;
  border-radius: 4px;
  background: #fff;
}
.grip {
  width: 32px;
  height: 4px;
  margin-bottom: 8px;
  border-radius: 2px;
  background: #a8a8a8;
}
.tool {
  width: 32px;
  height: 32px;
  margin-bottom: 8px;
  border-radius: 4px;
}
.active {
  background: #115fd8;
  color: #fff;
}
.more {
  position: relative;
}
.more::after {
  position: absolute;
  right: 4px;
  bottom: 4px;
  width: 5px;
  height: 5px;
  background: linear-gradient(135deg, transparent 50%, currentColor 50%);
  content: "";
}
.bar {
  width: 18px;
  height: 1px;
  background: #c4c4c4;
}
.tool.shape {
  height: 28px;
}
.tool.shape:last-child {
  margin: 4px 0;
}
.palette .bar {
  margin-bottom: 10px;
}
.canvas {
  flex: 1;
  min-width: 0;
  padding-left: 2px;
}
.sheet {
  width: 100%;
  max-width: 1744px;
  height: 100%;
  margin: 0 auto;
  padding: 74px 144px 0 147px;
  border: solid #d0d0d0;
  border-width: 0 1px;
  background: #fff;
  color: #000;
  font-family: Lato, "Open Sans", sans-serif;
  font-size: 23px;
  font-weight: 300;
  line-height: 30px;
}
.running-head {
  display: flex;
  justify-content: space-between;
  padding: 0 6px 0 3px;
  border-bottom: 5px solid #8aabca;
  color: #1f4a78;
  font-size: 21px;
}
.credit {
  color: #ff0000;
}
.plan {
  width: calc(100% - 5px);
  height: 957px;
  margin: 41px 3px 0 2px;
  border-collapse: collapse;
}
th,
td {
  padding: 1px 10px;
  border: 2px solid #000;
  font-weight: 300;
  text-align: left;
  vertical-align: top;
  white-space: nowrap;
}
th {
  width: 230px;
}
.label {
  display: flex;
  gap: 31px;
}
b {
  font-weight: 700;
}
p {
  margin: 0 0 30px;
}
.folio {
  margin: 24px 3px 0;
  font-size: 25px;
}

.rail {
  display: flex;
  flex-direction: column;
  align-items: center;
  width: 48px;
  padding: 9px 1px 2px 0;
  border-left: 1px solid #cacaca;
  background: #fff;
}
.rail button {
  width: 32px;
  height: 32px;
}
.violet {
  color: #5a4bd0;
}
.violet + .bar {
  width: 24px;
  margin: 6px 0 5px;
}
.rail .panel {
  margin-bottom: 7px;
}
.pager {
  display: flex;
  flex-direction: column;
  align-items: center;
  gap: 3px;
  margin-top: auto;
  font-size: 13px;
}
.pager input {
  width: 32px;
  height: 32px;
  padding: 0 0 4px;
  border: 1px solid #aaa;
  border-radius: 4px;
  font: inherit;
  text-align: center;
}
.total {
  line-height: 32px;
}
.bar.wide {
  width: 34px;
}

.assistant {
  position: absolute;
  bottom: 0;
  left: 897px;
  display: flex;
  align-items: center;
  width: 702px;
  height: 54px;
  padding: 0 14px 0 17px;
  border: 1px solid #b5b5b5;
  border-bottom: 0;
  border-radius: 6px 6px 0 0;
  background: #e1e1e1;
}
.assistant label {
  display: flex;
  align-items: center;
  gap: 6px;
  width: 161px;
  color: #000;
  font-weight: 600;
}
.prompt {
  display: flex;
  align-items: center;
  width: 464px;
  height: 40px;
  margin-right: 20px;
  padding: 0 6px 0 14px;
  border: 2px solid #c8c8c8;
  border-radius: 9px;
  background: #fff;
}
.prompt input {
  flex: 1;
  min-width: 0;
  padding: 0 0 3px;
  border: 0;
  background: none;
  font: inherit;
}
.prompt input::placeholder {
  color: #aaa;
}
.send {
  width: 24px;
  height: 24px;
  border-radius: 4px;
  background: #cfcfcf;
  color: #aaa;
}
.shade {
  position: absolute;
  right: 200px;
  bottom: 0;
  left: 200px;
  height: 50px;
  background: linear-gradient(transparent, rgba(0, 0, 0, 0.1));
  mask-image: linear-gradient(90deg, transparent, #000 160px, #000 calc(100% - 160px), transparent);
  pointer-events: none;
}

/* dock */
.dock {
  display: flex;
  align-items: flex-start;
  align-self: center;
  gap: 16px;
  height: 79px;
  margin: 1px 0 5px;
  padding: 10px 13px 0 10px;
  border: 1px solid #74aca6;
  border-radius: 22px;
  background: #559a94;
}
.app {
  position: relative;
  width: 52px;
  height: 52px;
}
.icon {
  width: 52px;
  height: 52px;
}
.contacts,
.disk {
  align-items: flex-start;
  justify-content: flex-start;
}
.contacts .icon {
  width: 54px;
}
.beyond .icon {
  width: 58px;
  height: 58px;
}
.disk .icon {
  width: 56px;
  height: 56px;
}
.open::after {
  position: absolute;
  bottom: -14px;
  left: 24px;
  width: 4px;
  height: 4px;
  border-radius: 50%;
  background: #07211f;
  content: "";
}
.date {
  position: absolute;
  inset: 0;
  display: flex;
  flex-direction: column;
  font-family: Inter, sans-serif;
  text-align: center;
}
.month {
  color: #fff;
  font-size: 10px;
  font-weight: 600;
  line-height: 17px;
}
.day {
  color: #222;
  font-size: 28px;
  font-weight: 300;
  line-height: 32px;
}
.mark {
  position: absolute;
  top: 16px;
  left: 5px;
  width: 19px;
  color: #fff;
  font-family: Inter, sans-serif;
  font-size: 14px;
  font-weight: 700;
  line-height: 20px;
  text-align: center;
}
.badge {
  position: absolute;
  top: -6px;
  right: -9px;
  width: 26px;
  height: 26px;
  border-radius: 50%;
  background: #ef3f36;
  color: #fff;
  font-family: Inter, sans-serif;
  font-size: 13px;
  line-height: 26px;
  text-align: center;
}
.divider {
  width: 1px;
  height: 60px;
  margin: -2px 7px 0;
  background: #1d6861;
}
.minis {
  display: flex;
  gap: 8px;
  margin-left: -4px;
}
.mini {
  position: relative;
  width: 60px;
  height: 52px;
}
.thumb {
  width: 60px;
  height: 52px;
}
.thumb.term {
  width: 62px;
  height: 42px;
}
.mini-app {
  position: absolute;
  right: 0;
  bottom: -3px;
}
.ring {
  position: absolute;
  top: 8px;
  left: 4px;
  width: 4px;
  height: 4px;
  border: 1px solid #fff;
  border-radius: 50%;
}
.trash {
  margin-top: -5px;
}
</style>
